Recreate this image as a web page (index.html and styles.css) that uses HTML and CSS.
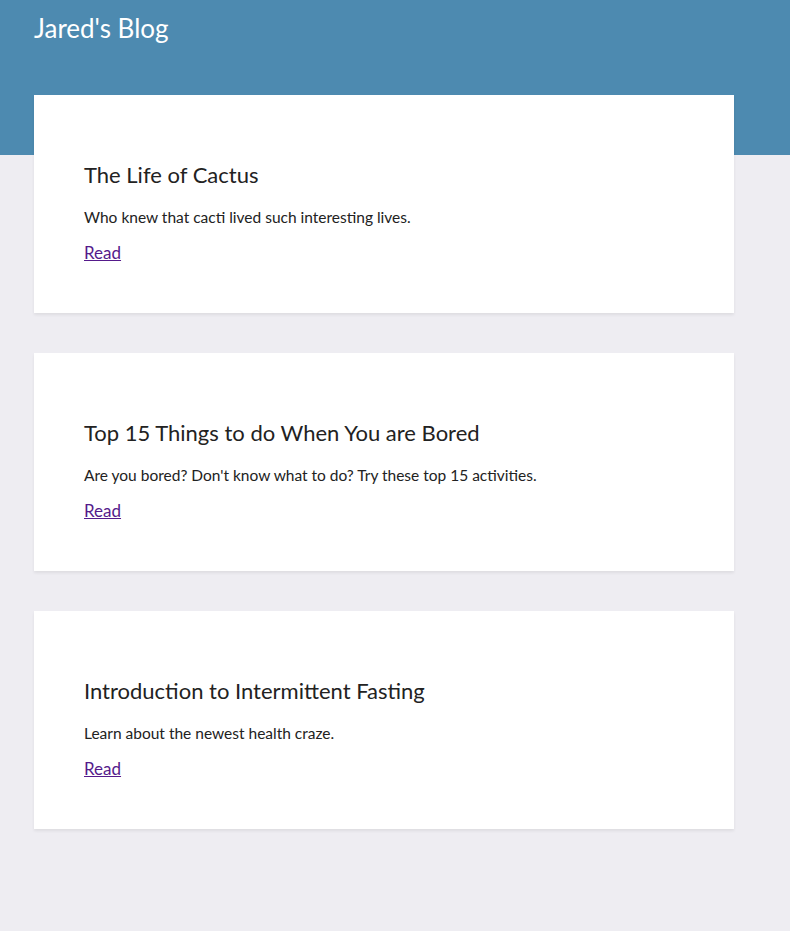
FILE: index.html
```html
<!DOCTYPE html>
<html lang="en">
<head>
<meta charset="utf-8">
<title>Jared's Blog</title>
<link rel="stylesheet" href="styles.css">
</head>
<body>
<header class="site-header">
  <h1 class="site-title">Jared's Blog</h1>
</header>
<main class="posts">
  <article class="card">
    <h2 class="card-title">The Life of Cactus</h2>
    <p class="card-text">Who knew that cacti lived such interesting lives.</p>
    <a class="card-link" href="#">Read</a>
  </article>
  <article class="card">
    <h2 class="card-title">Top 15 Things to do When You are Bored</h2>
    <p class="card-text">Are you bored? Don't know what to do? Try these top 15 activities.</p>
    <a class="card-link" href="#">Read</a>
  </article>
  <article class="card">
    <h2 class="card-title">Introduction to Intermittent Fasting</h2>
    <p class="card-text">Learn about the newest health craze.</p>
    <a class="card-link" href="#">Read</a>
  </article>
</main>
</body>
</html>
```
FILE: styles.css
```css
* { box-sizing: border-box; }
html, body {
  margin: 0;
  padding: 0;
  background: #eeedf2;
  font-family: Lato, "Noto Sans", sans-serif;
  color: #222;
}
.site-header {
  background: #4d8ab0;
  height: 155px;
  padding: 12px 34px 0;
}
.site-title {
  margin: 0;
  font-size: 26px;
  line-height: 32px;
  font-weight: 400;
  color: #fff;
}
.posts {
  margin-top: -60px;
  padding: 0 56px 100px 34px;
  display: flex;
  flex-direction: column;
  gap: 40px;
}
.card {
  background: #fff;
  height: 218px;
  padding: 65px 50px 50px;
  box-shadow: 0 2px 3px rgba(0, 0, 0, 0.07);
  display: flex;
  flex-direction: column;
  align-items: flex-start;
}
.card-title {
  margin: 0;
  font-size: 22px;
  line-height: 30px;
  font-weight: 400;
}
.card-text {
  margin: 17px 0 16px;
  font-size: 15.5px;
  line-height: 20px;
}
.card-link {
  font-size: 17px;
  line-height: 20px;
  color: #551a8b;
}
```
